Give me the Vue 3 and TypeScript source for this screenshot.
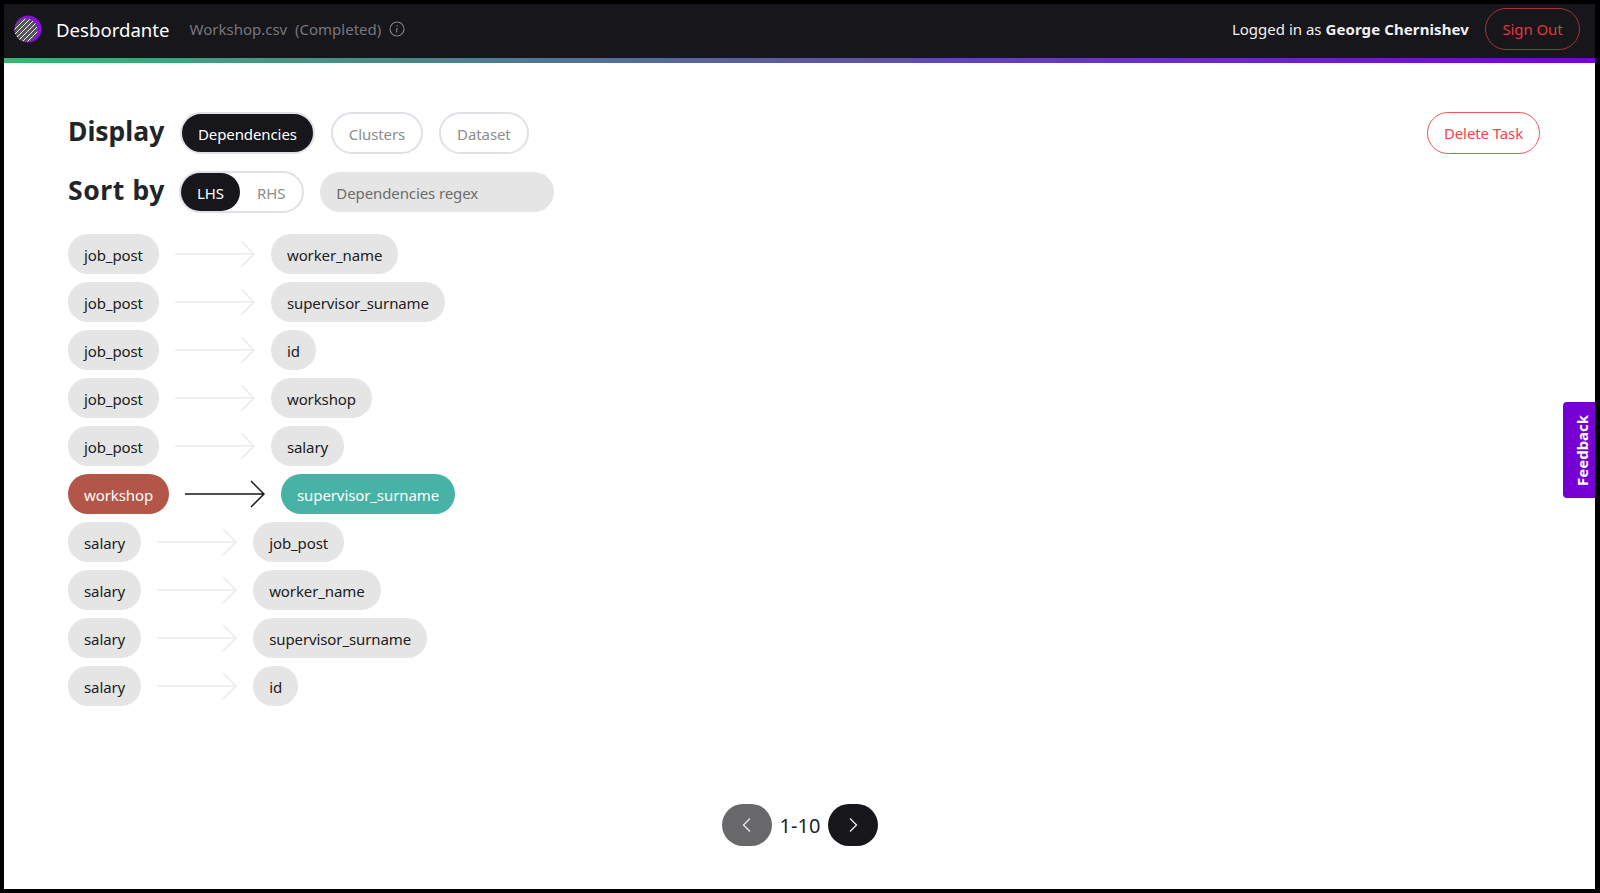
<template>
  <div class="frame">
    <header class="topbar">
      <div class="brand">
        <svg class="logo" width="28" height="28" viewBox="0 0 28 28">
          <defs>
            <clipPath id="logoClip"><circle cx="12" cy="15" r="11.500" /></clipPath>
          </defs>
          <circle cx="14" cy="14" r="13.500" fill="#8a10e0" />
          <circle cx="12" cy="15" r="11.500" fill="#55555a" />
          <g clip-path="url(#logoClip)" stroke="#fff" stroke-width="0.9">
            <line v-for="n in 10" :key="n" :x1="n * 5" y1="0" :x2="n * 5 - 30" y2="30" />
          </g>
        </svg>
        <span class="brand-name">Desbordante</span>
        <span class="task-name">Workshop.csv&nbsp; (Completed)</span>
        <svg class="info" width="16" height="16" viewBox="0 0 16 16" fill="none" stroke="#85848a" stroke-width="1.100">
          <circle cx="8" cy="8" r="7" />
          <line x1="8" y1="7" x2="7.500" y2="11.600" />
          <line x1="8.200" y1="4.300" x2="8.200" y2="5.500" />
        </svg>
      </div>
      <div class="account">
        <span class="logged">Logged in as <b>George Chernishev</b></span>
        <button class="btn-outline sign-out">Sign Out</button>
      </div>
    </header>
    <div class="gradient"></div>

    <main class="content">
      <div class="toolbar">
        <div class="filters">
          <div class="filter-row display-row">
            <h2 class="label">Display</h2>
            <button class="pill active">Dependencies</button>
            <button class="pill">Clusters</button>
            <button class="pill">Dataset</button>
          </div>
          <div class="filter-row sort-row">
            <h2 class="label">Sort by</h2>
            <div class="toggle">
              <span class="toggle-on">LHS</span>
              <span class="toggle-off">RHS</span>
            </div>
            <div class="regex">Dependencies regex</div>
          </div>
        </div>
        <button class="btn-outline delete">Delete Task</button>
      </div>

      <div class="deps">
        <div v-for="dep in deps" :key="dep.lhs + dep.rhs" class="dep" :class="{ selected: dep.selected }">
          <span class="chip lhs">{{ dep.lhs }}</span>
          <svg class="arrow" width="80" height="28" viewBox="0 0 80 28" fill="none">
            <path d="M0 14H79M66 1L79 14L66 27" />
          </svg>
          <span class="chip rhs">{{ dep.rhs }}</span>
        </div>
      </div>

      <nav class="pager">
        <button class="page-btn prev">
          <svg width="12" height="16" viewBox="0 0 12 16" fill="none" stroke="#e8e8e8" stroke-width="1.400"><path d="M9 1.500L2.500 8L9 14.500" /></svg>
        </button>
        <span class="range">1-10</span>
        <button class="page-btn">
          <svg width="12" height="16" viewBox="0 0 12 16" fill="none" stroke="#e8e8e8" stroke-width="1.400"><path d="M3 1.500L9.500 8L3 14.500" /></svg>
        </button>
      </nav>
    </main>

    <button class="feedback">Feedback</button>
  </div>
</template>

<script setup lang="ts">
interface Dep {
  lhs: string;
  rhs: string;
  selected?: boolean;
}

const deps: Dep[] = [
  { lhs: 'job_post', rhs: 'worker_name' },
  { lhs: 'job_post', rhs: 'supervisor_surname' },
  { lhs: 'job_post', rhs: 'id' },
  { lhs: 'job_post', rhs: 'workshop' },
  { lhs: 'job_post', rhs: 'salary' },
  { lhs: 'workshop', rhs: 'supervisor_surname', selected: true },
  { lhs: 'salary', rhs: 'job_post' },
  { lhs: 'salary', rhs: 'worker_name' },
  { lhs: 'salary', rhs: 'supervisor_surname' },
  { lhs: 'salary', rhs: 'id' },
];
</script>

<style>
html, body {
  margin: 0;
  background: #000;
}
</style>

<style scoped>
.frame {
  position: relative;
  box-sizing: border-box;
  width: 1600px;
  height: 893px;
  border: solid #000;
  border-width: 4px 5px 4px 4px;
  background: #fff;
  display: flex;
  flex-direction: column;
  overflow: hidden;
  font-family: "Noto Sans", "Open Sans", sans-serif;
  font-size: 15px;
  letter-spacing: -0.1px;
  color: #212529;
}

button {
  font-family: inherit;
  font-size: 15px;
  letter-spacing: inherit;
  cursor: pointer;
  background: none;
}

.topbar {
  height: 54px;
  box-sizing: border-box;
  flex: none;
  background: #17161b;
  display: flex;
  align-items: center;
  justify-content: space-between;
  padding: 0 15px 4px 10px;
}

.brand {
  display: flex;
  align-items: center;
}

.brand-name {
  color: #fff;
  font-size: 18.600px;
  letter-spacing: 0;
  margin-left: 14px;
}

.task-name {
  color: #77767b;
  letter-spacing: 0;
  margin-left: 20px;
}

.info {
  margin-left: 8px;
}

.account {
  display: flex;
  align-items: center;
  gap: 16px;
}

.logged {
  color: #f0f0f0;
  letter-spacing: 0;
}

.logged b {
  letter-spacing: 0.1px;
}

.btn-outline {
  border-radius: 21px;
  height: 42px;
  padding: 0;
}

.sign-out {
  width: 95px;
  border: 1px solid #a83237;
  color: #e0383e;
}

.gradient {
  height: 5px;
  flex: none;
  background: linear-gradient(90deg, #3cb371, #7a00d6);
}

.content {
  flex: 1;
  display: flex;
  flex-direction: column;
  padding: 49px 55px 0 64px;
}

.toolbar {
  display: flex;
  justify-content: space-between;
  align-items: flex-start;
}

.filter-row {
  display: flex;
  align-items: center;
}

.sort-row {
  margin-top: 17px;
}

.label {
  width: 96px;
  margin: 0 16px 4px 0;
  font-size: 26.500px;
  font-weight: 700;
  letter-spacing: 0;
  line-height: 38px;
  white-space: nowrap;
  color: #212529;
}

.sort-row .label {
  width: 95px;
  letter-spacing: 0.6px;
}

.pill {
  height: 42px;
  padding: 1px 16px 0;
  margin-right: 16px;
  border: 2px solid #dee2e6;
  border-radius: 21px;
  color: #8d8d8d;
}

.pill.active {
  background: #17161b;
  color: #fff;
}

.toggle {
  display: flex;
  height: 42px;
  box-sizing: border-box;
  border: 2px solid #dee2e6;
  border-radius: 21px;
  margin-right: 16px;
  align-items: center;
}

.toggle-on {
  background: #17161b;
  color: #fff;
  height: 38px;
  line-height: 40px;
  padding: 0 16px;
  border-radius: 19px;
}

.toggle-off {
  color: #8d8d8d;
  padding: 2px 17px 0;
}

.regex {
  width: 234px;
  height: 40px;
  line-height: 42px;
  box-sizing: border-box;
  padding-left: 16px;
  background: #e5e5e5;
  border-radius: 20px;
  color: #6c6c6c;
}

.delete {
  width: 113px;
  border: 1px solid #f4585d;
  color: #f4434a;
}

.deps {
  display: flex;
  flex-direction: column;
  gap: 8px;
  margin-top: 21px;
}

.dep {
  display: flex;
  align-items: center;
  gap: 16px;
}

.chip {
  height: 40px;
  line-height: 42px;
  padding: 0 16px;
  border-radius: 20px;
  background: #e5e5e5;
  color: #212121;
}

.arrow {
  stroke: #ebebeb;
  stroke-width: 1.500;
}

.selected .lhs {
  background: #b35548;
  color: #fff;
}

.selected .rhs {
  background: #47b2a6;
  color: #fff;
}

.selected .arrow {
  stroke: #17161b;
}

.pager {
  margin-top: 98px;
  margin-left: -8px;
  align-self: center;
  display: flex;
  align-items: center;
  gap: 8px;
}

.page-btn {
  width: 50px;
  height: 42px;
  border: none;
  border-radius: 21px;
  background: #17161b;
  display: flex;
  align-items: center;
  justify-content: center;
}

.page-btn.prev {
  background: #68686a;
}

.range {
  font-size: 20px;
  letter-spacing: 0;
  color: #212529;
}

.feedback {
  position: absolute;
  right: 0;
  top: 398px;
  width: 32px;
  height: 96px;
  padding: 0 6px 0 0;
  border: none;
  border-radius: 0 4px 4px 0;
  background: #7600d4;
  color: #fff;
  font-size: 15px;
  font-weight: 700;
  letter-spacing: 0;
  writing-mode: vertical-rl;
  transform: rotate(180deg);
}
</style>
